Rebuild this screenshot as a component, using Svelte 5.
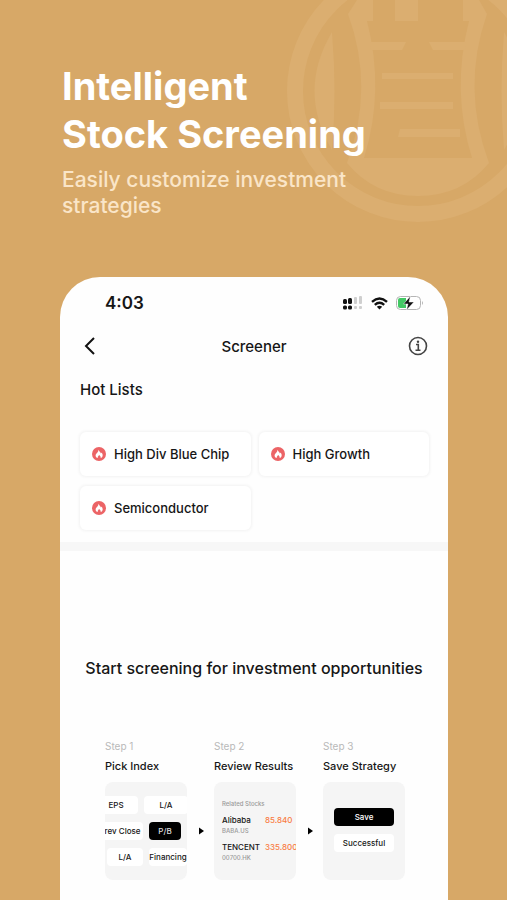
<script>
	const hotLists = ['High Div Blue Chip', 'High Growth', 'Semiconductor']

	const indexRows = [
		[{ name: 'EPS' }, { name: 'L/A' }],
		[{ name: 'Prev Close' }, { name: 'P/B', active: true }],
		[{ name: 'L/A' }, { name: 'Financing' }],
	]

	const stocks = [
		{ name: 'Alibaba', code: 'BABA.US', price: '85.840' },
		{ name: 'TENCENT', code: '00700.HK', price: '335.800' },
	]
</script>

{#snippet flame()}
	<svg class="flame" viewBox="0 0 14 14" aria-hidden="true">
		<circle cx="7" cy="7" r="7" fill="#ec6466" />
		<path
			d="M6.6 2.7c.3 1.7 2 2.3 2.3 3.8.4-.2.5-.5.5-.9 1 1 1.5 2.100 1.200 3.300-.3 1.200-1 1.900-2 2.100.4-1-.3-1.900-1.400-3-.9 1-1.800 1.900-1.400 3-1.300-.2-2.200-1.200-2.200-2.500 0-1.500 1.200-2.200 2-3.200.5-.8.8-1.600 1-2.600z"
			fill="#fff"
		/>
	</svg>
{/snippet}

{#snippet arrow()}
	<svg class="arrow" viewBox="0 0 5 8" aria-hidden="true">
		<path d="M0 0.500L5 4L0 7.500z" />
	</svg>
{/snippet}

<div class="page">
	<svg class="watermark" viewBox="0 0 262 222" aria-hidden="true">
		<circle cx="131" cy="91" r="123" fill="none" stroke-width="16" />
		<g stroke="none">
			<path d="M45 32Q10 91 45 150Q50 91 45 32z" />
			<path d="M217 32Q252 91 217 150Q212 91 217 32z" />
			<path
				d="M61 14L70 0H86V21H80Q98 91 77 158H185Q164 91 182 21H176V0H192L200 14Q174 88 202 163Q175 196 131 196T60 163Q88 88 61 14z"
				fill-rule="evenodd"
			/>
			<path d="M108 0h23v21h-23zM83 42h36l-4 8H84zM142 42h37l-1 8h-32z" />
			<path d="M95 73h71v6H95zM93 102h73v7H93zM113 129h60v8h-62z" />
		</g>
	</svg>

	<header class="hero">
		<h1>Intelligent<br />Stock Screening</h1>
		<p>Easily customize investment strategies</p>
	</header>

	<main class="phone">
		<div class="status">
			<span>4:03</span>
			<div class="status-icons">
				<svg width="20" height="14" viewBox="0 0 20 14" aria-hidden="true">
					<g fill="#111">
						<rect x="0" y="3" width="4" height="5" rx="1.500" />
						<rect x="5" y="2" width="4" height="6" rx="1.500" />
						<rect x="0" y="9.500" width="4" height="4" rx="1.500" />
						<rect x="5" y="9.500" width="4" height="4" rx="1.500" />
					</g>
					<g fill="#cfcfcf">
						<rect x="11" y="1" width="3" height="7" rx="1" />
						<rect x="16" y="0" width="3" height="8" rx="1" />
						<rect x="11" y="10" width="3" height="3" rx="1" />
						<rect x="16" y="10" width="3" height="3" rx="1" />
					</g>
				</svg>
				<svg width="17" height="13" viewBox="0 0 17 13" aria-hidden="true">
					<g fill="none" stroke="#111" stroke-width="2.400">
						<path d="M1 4.800Q8.500-1.800 16 4.800" />
						<path d="M3.800 7.900Q8.500 3.800 13.200 7.900" />
					</g>
					<path d="M8.500 12.500L5.800 9.700Q8.500 7.700 11.200 9.700z" fill="#111" />
				</svg>
				<svg width="28" height="14" viewBox="0 0 28 14" aria-hidden="true">
					<rect x="0.500" y="0.500" width="24" height="13" rx="4" fill="#fff" stroke="#b5b5b5" />
					<path d="M26 5q2 2 0 4z" fill="#b5b5b5" />
					<path d="M4 2h6v10H4q-2 0-2-2V4q0-2 2-2z" fill="#42c864" />
					<path d="M14.500 0L7.500 8h4.500l-1.500 6L18 6h-5z" fill="#111" stroke="#fff" stroke-width="0.500" />
				</svg>
			</div>
		</div>

		<nav>
			<button aria-label="Back">
				<svg width="20" height="20" viewBox="0 0 20 20">
					<path d="M14 2L6 10l8 8" fill="none" stroke="#111" stroke-width="2" />
				</svg>
			</button>
			<h2>Screener</h2>
			<button aria-label="Information">
				<svg width="20" height="20" viewBox="0 0 20 20">
					<g fill="none" stroke="#444" stroke-width="1.600">
						<circle cx="10" cy="10" r="8.500" />
						<path d="M8 8.500h2.300v5.500M7.500 14.200h5" />
					</g>
					<circle cx="10" cy="5.700" r="1.200" fill="#444" />
				</svg>
			</button>
		</nav>

		<section class="hot">
			<h3>Hot Lists</h3>
			<div class="lists">
				{#each hotLists as name}
					<button>
						{@render flame()}
						{name}
					</button>
				{/each}
			</div>
		</section>

		<section class="start">
			<h2>Start screening for investment opportunities</h2>

			<div class="steps">
				<div class="step">
					<small>Step 1</small>
					<h4>Pick Index</h4>
					<div class="preview indexes">
						{#each indexRows as row, i}
							<div class="row" class:shifted={i === 1} class:last={i === 2}>
								{#each row as item}
									<span class:active={item.active}>{item.name}</span>
								{/each}
							</div>
						{/each}
					</div>
				</div>

				{@render arrow()}

				<div class="step">
					<small>Step 2</small>
					<h4>Review Results</h4>
					<div class="preview results">
						<p>Related Stocks</p>
						{#each stocks as stock}
							<div class="stock">
								<div>
									<b>{stock.name}</b>
									<i>{stock.code}</i>
								</div>
								<strong>{stock.price}</strong>
							</div>
						{/each}
					</div>
				</div>

				{@render arrow()}

				<div class="step">
					<small>Step 3</small>
					<h4>Save Strategy</h4>
					<div class="preview save">
						<button>Save</button>
						<span>Successful</span>
					</div>
				</div>
			</div>
		</section>
	</main>
</div>

<style>
	:global(body) {
		margin: 0;
	}

	h1,
	h2,
	h3,
	h4,
	p {
		margin: 0;
		font-weight: 500;
	}

	button {
		padding: 0;
		border: 0;
		background: none;
		font: inherit;
		color: inherit;
	}

	svg {
		display: block;
		flex: none;
	}

	.page {
		position: relative;
		display: flex;
		flex-direction: column;
		box-sizing: border-box;
		min-height: 100vh;
		padding: 62px 59px 0 60px;
		overflow: hidden;
		background: #d7a867;
		color: #161616;
		font-family: Inter, 'Liberation Sans', sans-serif;
	}

	.watermark {
		position: absolute;
		top: 0;
		right: -42px;
		width: 262px;
		fill: #dbae70;
		stroke: #dbae70;
	}

	.hero {
		position: relative;
		height: 215px;
		padding-left: 2px;
		color: #fff;

		h1 {
			font-size: 38px;
			line-height: 48px;
			font-weight: 700;
		}

		p {
			margin-top: 9px;
			font-size: 21px;
			line-height: 26px;
			color: #fae5c8;
		}
	}

	.phone {
		position: relative;
		flex: 1;
		border-radius: 40px 40px 0 0;
		background: #fefefe;
	}

	.status {
		display: flex;
		justify-content: space-between;
		align-items: center;
		height: 52px;
		padding: 0 24px 0 45px;
		font-size: 17px;
		font-weight: 600;
	}

	.status-icons {
		display: flex;
		align-items: center;
		gap: 8px;
	}

	nav {
		display: flex;
		justify-content: space-between;
		align-items: center;
		height: 34px;
		padding: 0 20px;

		h2 {
			font-size: 15px;
		}
	}

	.hot {
		padding: 17px 19px 12px 20px;
		border-bottom: 9px solid #f7f7f7;

		h3 {
			font-size: 15px;
			line-height: 20px;
		}
	}

	.lists {
		display: grid;
		grid-template-columns: 1fr 1fr;
		gap: 10px 8px;
		margin-top: 32px;

		button {
			display: flex;
			align-items: center;
			gap: 8px;
			height: 44px;
			padding-left: 12px;
			border-radius: 6px;
			background: #fff;
			box-shadow: 0 0 3px 1px #f2f2f2;
			font-size: 13px;
			font-weight: 500;
		}
	}

	.flame {
		width: 14px;
		height: 14px;
	}

	.start {
		padding-top: 105px;

		h2 {
			font-size: 16px;
			line-height: 24px;
			text-align: center;
			white-space: nowrap;
		}
	}

	.steps {
		display: flex;
		justify-content: center;
		margin-top: 59px;
		padding-left: 2px;
	}

	.step {
		width: 82px;

		small {
			display: block;
			font-size: 10px;
			line-height: 14px;
			color: #b9b9b9;
		}

		h4 {
			margin: 5px 0 8px;
			font-size: 11px;
			line-height: 16px;
			white-space: nowrap;
		}
	}

	.arrow {
		width: 5px;
		height: 8px;
		margin: 88px 10px 0 12px;
	}

	.preview {
		box-sizing: border-box;
		height: 98px;
		border-radius: 8px;
		overflow: hidden;
		background: #f5f5f5;
		font-size: 8px;
		font-weight: 500;
		white-space: nowrap;
	}

	.indexes {
		display: flex;
		flex-direction: column;
		justify-content: center;
		gap: 8px;

		.row {
			display: flex;
			justify-content: center;
			gap: 6px;
			margin-left: -10px;
		}

		span {
			flex: none;
			box-sizing: border-box;
			width: 44px;
			border-radius: 4px;
			background: #fff;
			line-height: 18px;
			text-align: center;
		}

		.shifted {
			justify-content: flex-end;
			padding-right: 6px;

			span:first-child {
				width: 46px;
			}
		}

		.last {
			margin-left: 0;
			justify-content: flex-end;

			span:first-child {
				width: 36px;
			}

			span:last-child {
				width: 38px;
			}
		}

		.active {
			width: 32px;
			background: #000;
			color: #ddd;
		}
	}

	.results {
		padding: 18px 0 0 8px;

		p {
			font-size: 6px;
			line-height: 8px;
			color: #999;
		}
	}

	.stock {
		display: flex;
		margin-top: 6px;
		line-height: 12px;

		div {
			flex: none;
			width: 43px;
		}

		b,
		strong {
			display: block;
			font-weight: 500;
		}

		i {
			display: block;
			font-size: 6px;
			line-height: 9px;
			font-style: normal;
			color: #999;
		}

		strong {
			color: #f97c43;
		}
	}

	.save {
		display: flex;
		flex-direction: column;
		gap: 8px;
		padding: 26px 11px 0;

		button,
		span {
			border-radius: 4px;
			background: #fff;
			line-height: 18px;
			text-align: center;
		}

		button {
			background: #000;
			color: #fff;
		}
	}
</style>
